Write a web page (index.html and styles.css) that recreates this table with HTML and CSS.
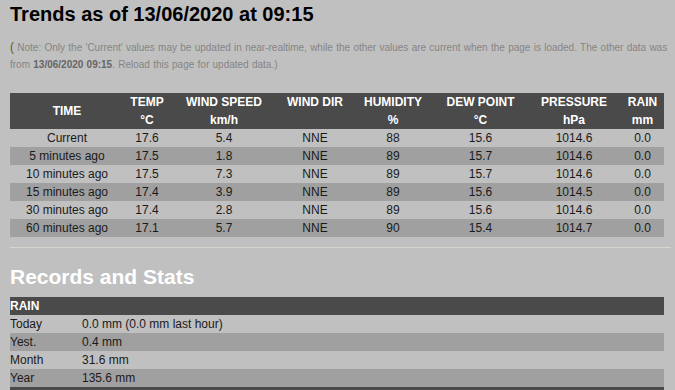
FILE: index.html
```html
<!DOCTYPE html>
<html>
<head>
<meta charset="utf-8">
<link rel="stylesheet" href="styles.css">
</head>
<body>
<div class="page">
  <h1 class="title">Trends as of 13/06/2020 at 09:15</h1>
  <p class="note"><span class="paren">(</span> Note: Only the 'Current' values may be updated in near-realtime, while the other values are current when the page is loaded. The other data was from <b>13/06/2020 09:15</b>. Reload this page for updated data.)</p>
  <table class="trends">
    <colgroup>
      <col class="c-time"><col class="c-temp"><col class="c-ws"><col class="c-wd"><col class="c-hum"><col class="c-dew"><col class="c-pres"><col class="c-rain">
    </colgroup>
    <thead>
      <tr><th>TIME</th><th>TEMP<br>°C</th><th>WIND SPEED<br>km/h</th><th>WIND DIR<br>&nbsp;</th><th>HUMIDITY<br>%</th><th>DEW POINT<br>°C</th><th>PRESSURE<br>hPa</th><th>RAIN<br>mm</th></tr>
    </thead>
    <tbody>
      <tr><td>Current</td><td>17.6</td><td>5.4</td><td>NNE</td><td>88</td><td>15.6</td><td>1014.6</td><td>0.0</td></tr>
      <tr><td>5 minutes ago</td><td>17.5</td><td>1.8</td><td>NNE</td><td>89</td><td>15.7</td><td>1014.6</td><td>0.0</td></tr>
      <tr><td>10 minutes ago</td><td>17.5</td><td>7.3</td><td>NNE</td><td>89</td><td>15.7</td><td>1014.6</td><td>0.0</td></tr>
      <tr><td>15 minutes ago</td><td>17.4</td><td>3.9</td><td>NNE</td><td>89</td><td>15.6</td><td>1014.5</td><td>0.0</td></tr>
      <tr><td>30 minutes ago</td><td>17.4</td><td>2.8</td><td>NNE</td><td>89</td><td>15.6</td><td>1014.6</td><td>0.0</td></tr>
      <tr><td>60 minutes ago</td><td>17.1</td><td>5.7</td><td>NNE</td><td>90</td><td>15.4</td><td>1014.7</td><td>0.0</td></tr>
    </tbody>
  </table>
  <hr class="rule">
  <h2 class="subtitle">Records and Stats</h2>
  <table class="records">
    <colgroup><col class="r-label"><col></colgroup>
    <thead><tr><th colspan="2">RAIN</th></tr></thead>
    <tbody>
      <tr><td>Today</td><td>0.0 mm (0.0 mm last hour)</td></tr>
      <tr><td>Yest.</td><td>0.4 mm</td></tr>
      <tr><td>Month</td><td>31.6 mm</td></tr>
      <tr><td>Year</td><td>135.6 mm</td></tr>
    </tbody>
    <tbody><tr class="next"><th colspan="2">&nbsp;</th></tr></tbody>
  </table>
</div>
</body>
</html>
```
FILE: styles.css
```css
html, body {
  margin: 0;
  padding: 0;
  background: #c0c0c0;
}
body {
  font-family: "Liberation Sans", Arial, sans-serif;
  color: #1a1a1a;
  overflow: hidden;
}
.page {
  padding: 0 4px 0 10px;
}
.title {
  margin: 0;
  padding-top: 3px;
  font-size: 20px;
  line-height: 22px;
  font-weight: bold;
  color: #000;
}
.note {
  margin: 14px 0 0;
  font-size: 10px;
  line-height: 17px;
  word-spacing: 0.5px;
  color: #858585;
}
.note b {
  color: #666;
}
.paren {
  color: #6a5410;
  font-size: 12px;
  line-height: 1;
}
table {
  border-collapse: collapse;
  table-layout: fixed;
  width: 654px;
  font-size: 12px;
}
.trends {
  margin-top: 20px;
}
th, td {
  padding: 0;
  line-height: 18px;
  height: 18px;
  white-space: nowrap;
}
thead th {
  background: #4a4a4a;
  color: #fff;
  font-weight: bold;
}
.trends th, .trends td {
  text-align: center;
}
tbody tr:nth-child(even) {
  background: #a0a0a0;
}
.c-time { width: 114px; }
.c-temp { width: 46px; }
.c-ws { width: 108px; }
.c-wd { width: 74px; }
.c-hum { width: 82px; }
.c-dew { width: 93px; }
.c-pres { width: 94px; }
.c-rain { width: 43px; }
.rule {
  margin: 10px 0 0;
  border: 0;
  border-top: 1px solid #d6d6cf;
  height: 0;
}
.subtitle {
  margin: 17px 0 0;
  font-size: 21px;
  line-height: 24px;
  font-weight: bold;
  color: #fff;
}
.records {
  margin-top: 8px;
}
.records th, .records td {
  text-align: left;
}
.r-label { width: 72px; }
.records .next th {
  background: #4a4a4a;
}
```
